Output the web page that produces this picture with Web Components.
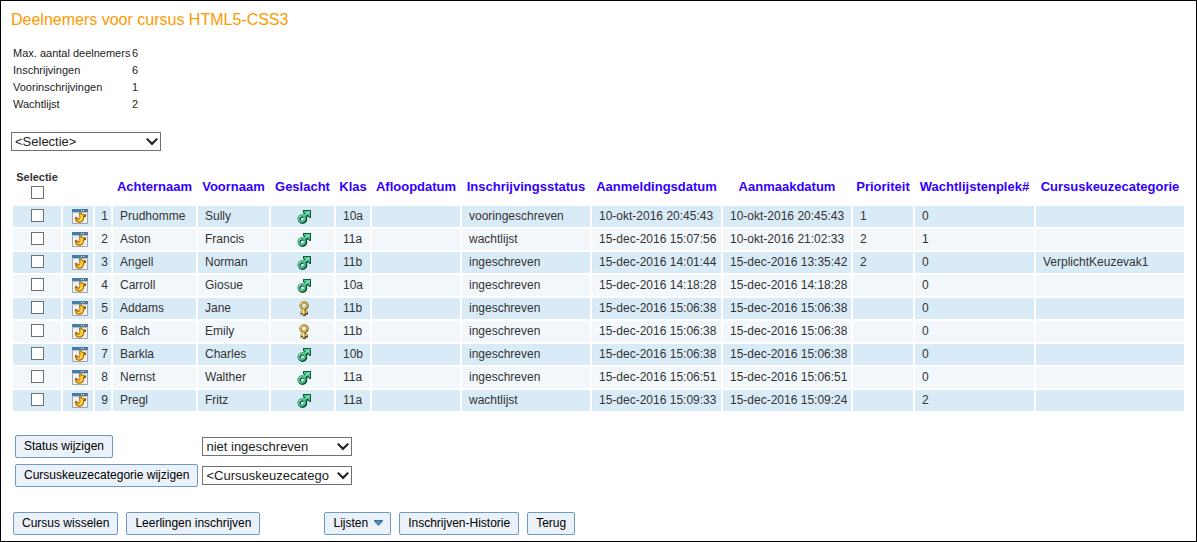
<!DOCTYPE html>
<html lang="nl">
<head>
<meta charset="utf-8">
<title>Deelnemers</title>
<style>
  body { margin: 0; font-family: "Liberation Sans", Arial, sans-serif; color: #333; background: #fff; }
</style>
</head>
<body>
<course-page></course-page>

<template id="t-page">
  <style>
    :host { display: flex; flex-direction: column; align-items: flex-start; box-sizing: border-box; min-height: 100vh; border: 1px solid #000; padding: 10px 10px 6px; }
    h1 { margin: 0 0 16px; font-size: 16px; line-height: 18px; font-weight: 400; color: #ff9900; }
    participants-table { align-self: stretch; margin-top: 17px; }
    .actions { display: grid; grid-template-columns: max-content 150px; column-gap: 4px; row-gap: 6px; align-items: center; justify-items: start; margin: 22px 0 25px 4px; }
    nav { display: flex; gap: 8px; margin-left: 2px; }
    .group { display: flex; gap: 8px; margin-left: 56px; }
  </style>
  <h1>Deelnemers voor cursus HTML5-CSS3</h1>
  <course-totals></course-totals>
  <pick-list label="Selectie" value="&lt;Selectie&gt;"></pick-list>
  <participants-table></participants-table>
  <div class="actions">
    <tool-button>Status wijzigen</tool-button>
    <pick-list label="Status" value="niet ingeschreven"></pick-list>
    <tool-button>Cursuskeuzecategorie wijzigen</tool-button>
    <pick-list label="Cursuskeuzecategorie" value="&lt;Cursuskeuzecatego"></pick-list>
  </div>
  <nav>
    <tool-button>Cursus wisselen</tool-button>
    <tool-button>Leerlingen inschrijven</tool-button>
    <div class="group">
      <tool-button menu>Lijsten</tool-button>
      <tool-button>Inschrijven-Historie</tool-button>
      <tool-button>Terug</tool-button>
    </div>
  </nav>
</template>

<template id="t-totals">
  <style>
    :host { display: block; margin-bottom: 19px; }
    table { border-collapse: collapse; margin-left: 2px; font-size: 11px; line-height: 17px; }
    th, td { padding: 0; text-align: left; font-weight: 400; color: #222; white-space: nowrap; }
    th { padding-right: 1px; min-width: 118px; }
  </style>
  <table>
    <tr><th scope="row">Max. aantal deelnemers</th><td>6</td></tr>
    <tr><th scope="row">Inschrijvingen</th><td>6</td></tr>
    <tr><th scope="row">Voorinschrijvingen</th><td>1</td></tr>
    <tr><th scope="row">Wachtlijst</th><td>2</td></tr>
  </table>
</template>

<template id="t-pick">
  <style>
    :host { display: inline-grid; width: 150px; align-items: center; }
    select, svg { grid-area: 1 / 1; }
    select { appearance: none; box-sizing: border-box; width: 100%; height: 19px; margin: 0; padding: 0 20px 0 3px; border: 1px solid #707070; border-radius: 0; background: #fff; color: #222; font: 13px/17px "Liberation Sans", Arial, sans-serif; }
    svg { justify-self: end; margin-right: 3px; pointer-events: none; }
  </style>
  <select><option></option></select>
  <svg width="12" height="8" viewBox="0 0 12 8"><path d="M0 1.2 1.5 0 6 4.2 10.5 0 12 1.2 6 7.4Z" fill="#222"/></svg>
</template>

<template id="t-button">
  <style>
    :host { display: inline-block; }
    button { display: flex; align-items: center; gap: 6px; box-sizing: border-box; height: 23px; margin: 0; padding: 0 8px 1px; border: 1px solid #6d9bc3; border-radius: 2px; background: #eaf1f8; color: #000; font: 12px/20px "Liberation Sans", Arial, sans-serif; white-space: nowrap; }
    :host([menu]) button { padding-right: 7px; }
    svg { display: none; }
    :host([menu]) svg { display: block; }
  </style>
  <button type="button"><slot></slot><svg width="9" height="6" viewBox="0 0 9 6"><path d="M0 0H9V1L5 5.5H4L0 1Z" fill="#3f719f"/><path d="M2 1.5H7L4.5 4Z" fill="#6b9cc8"/></svg></button>
</template>

<template id="t-icon">
  <style>:host { display: block; } svg { display: block; margin: auto; }</style>
</template>

<template id="t-table">
  <style>
    :host { display: block; }
    table { width: 100%; table-layout: fixed; border-collapse: separate; border-spacing: 2px; font-size: 12px; }
    th { height: 34px; padding: 0; white-space: nowrap; font-size: 13px; line-height: 16px; text-align: center; vertical-align: middle; }
    th:first-child { vertical-align: top; }
    th a { color: #3300ff; text-decoration: none; }
    th label { display: block; font-size: 11px; line-height: 14px; padding-bottom: 2px; }
    td { box-sizing: border-box; height: 21px; padding: 0 0 0 7px; line-height: 19px; white-space: nowrap; background: #f2f7fb; }
    tr:nth-child(odd) td { background: #d9ebf7; }
    td.c { text-align: center; padding: 0 0 2px; }
    td.g { padding: 0 0 0 3px; }
    td.n { text-align: right; padding: 0 3px 0 0; }
    td.e { padding: 0 0 0 9px; }
    .e row-icon { width: 16px; }
    input { appearance: none; display: block; box-sizing: border-box; width: 13px; height: 13px; margin: 0 auto; border: 1px solid #707070; background: #fff; }
  </style>
  <table>
    <colgroup></colgroup>
    <thead><tr></tr></thead>
    <tbody></tbody>
  </table>
</template>

<script>
const stamp = (el, id) => {
  const root = el.attachShadow({ mode: 'open' });
  root.append(document.getElementById(id).content.cloneNode(true));
  return root;
};

const ICONS = {
  edit: `<svg width="16" height="15" viewBox="0 0 16 15"><path d="M0.5 0.5H15.5V14.5H0.5Z" fill="#f1f0ec" stroke="#a3a5a8"/><path d="M0 0H16V3H0Z" fill="#477da3"/><path d="M0 3H16V4H0Z" fill="#a9c3d2"/><path d="M9 1H10V2H9ZM11 1H12V2H11Z" fill="#d7ecf5"/><path d="M13 1H15V2H13Z" fill="#d84c32"/><path d="M7 3.5H9.5L10.5 5H13.5V8H12C12.4 11.4 10.4 13.8 7.4 13.8 4.8 13.8 3 12.2 3 9.8V8H5L6 9.5 7.5 9.2Z" fill="#a5690f"/><path d="M8 4 9.6 5.8H12.3L11 7.4C11.4 10.6 9.8 12.6 7.4 12.6 5.3 12.6 4 11.4 3.8 9.4 5 10.8 6.2 10.9 7.4 10.4 8.6 9.6 8.6 7.5 8 4Z" fill="#ffc71c"/><path d="M9.2 6.4C10 9 9.2 11.2 7.2 11.5" fill="none" stroke="#ffe680"/><path d="M12 6H14V7.5L12.5 8.5Z" fill="#6f5516"/></svg>`,
  m: `<svg width="14" height="14" viewBox="0 0 14 14"><circle cx="5.5" cy="9.2" r="3.3" fill="none" stroke="#123f2b" stroke-width="3"/><path d="M7.6 6.8 11.5 2.9" stroke="#174b35" stroke-width="4"/><path d="M6 0H14V8H12.5L10 5.5 6 3Z" fill="#14573a"/><circle cx="4.7" cy="8.5" r="3.2" fill="none" stroke="#43bd85" stroke-width="2.2"/><path d="M7 6.2 11 2.2" stroke="#54cf99" stroke-width="2.2"/><path d="M7 1H13V7L10.5 4.5 9.5 3.2 7 2.5Z" fill="#4cc792"/><path d="M2 7.6 4.2 5.8M8.8 4.5 12.4 1.5" stroke="#c1f7df"/></svg>`,
  f: `<svg width="10" height="15" viewBox="0 0 10 15"><circle cx="5.1" cy="4.8" r="3.4" fill="none" stroke="#665925" stroke-width="2.4"/><path d="M5.3 8V15M1.5 12H9" stroke="#40381a" stroke-width="3"/><circle cx="4.7" cy="4.4" r="3.2" fill="none" stroke="#cfae43" stroke-width="2"/><path d="M4.7 7.8V14M1.2 11.3H8.4" stroke="#d7b64a" stroke-width="2"/><path d="M2.2 3 3.6 1.5M4.5 9V12" stroke="#fff2a8"/></svg>`
};

customElements.define('row-icon', class extends HTMLElement {
  constructor() { super(); this.root = stamp(this, 't-icon'); }
  connectedCallback() {
    const box = document.createElement('div');
    box.innerHTML = ICONS[this.getAttribute('name')];
    this.root.append(box);
  }
});

customElements.define('tool-button', class extends HTMLElement {
  constructor() { super(); stamp(this, 't-button'); }
});

customElements.define('pick-list', class extends HTMLElement {
  constructor() { super(); this.root = stamp(this, 't-pick'); }
  connectedCallback() {
    this.root.querySelector('select').setAttribute('aria-label', this.getAttribute('label'));
    this.root.querySelector('option').textContent = this.getAttribute('value');
  }
});

customElements.define('course-totals', class extends HTMLElement {
  constructor() { super(); stamp(this, 't-totals'); }
});

const COLUMNS = [
  ['sel', 48], ['', 30], ['', 16], ['Achternaam', 83], ['Voornaam', 71], ['Geslacht', 63], ['Klas', 34],
  ['Afloopdatum', 88], ['Inschrijvingsstatus', 128], ['Aanmeldingsdatum', 129], ['Aanmaakdatum', 128],
  ['Prioriteit', 60], ['Wachtlijstenplek#', 119], ['Cursuskeuzecategorie', 148]
];
const ROWS = [
  ['Prudhomme', 'Sully', 'm', '10a', '', 'vooringeschreven', '10-okt-2016 20:45:43', '10-okt-2016 20:45:43', '1', '0', ''],
  ['Aston', 'Francis', 'm', '11a', '', 'wachtlijst', '15-dec-2016 15:07:56', '10-okt-2016 21:02:33', '2', '1', ''],
  ['Angell', 'Norman', 'm', '11b', '', 'ingeschreven', '15-dec-2016 14:01:44', '15-dec-2016 13:35:42', '2', '0', 'VerplichtKeuzevak1'],
  ['Carroll', 'Giosue', 'm', '10a', '', 'ingeschreven', '15-dec-2016 14:18:28', '15-dec-2016 14:18:28', '', '0', ''],
  ['Addams', 'Jane', 'f', '11b', '', 'ingeschreven', '15-dec-2016 15:06:38', '15-dec-2016 15:06:38', '', '0', ''],
  ['Balch', 'Emily', 'f', '11b', '', 'ingeschreven', '15-dec-2016 15:06:38', '15-dec-2016 15:06:38', '', '0', ''],
  ['Barkla', 'Charles', 'm', '10b', '', 'ingeschreven', '15-dec-2016 15:06:38', '15-dec-2016 15:06:38', '', '0', ''],
  ['Nernst', 'Walther', 'm', '11a', '', 'ingeschreven', '15-dec-2016 15:06:51', '15-dec-2016 15:06:51', '', '0', ''],
  ['Pregl', 'Fritz', 'm', '11a', '', 'wachtlijst', '15-dec-2016 15:09:33', '15-dec-2016 15:09:24', '', '2', '']
];

customElements.define('participants-table', class extends HTMLElement {
  constructor() {
    super();
    const root = stamp(this, 't-table');
    root.querySelector('colgroup').innerHTML = COLUMNS.map(c => `<col style="width:${c[1]}px">`).join('');
    root.querySelector('thead tr').innerHTML = COLUMNS.map(([name]) =>
      name === 'sel' ? '<th><label for="all">Selectie</label><input type="checkbox" id="all"></th>'
        : name ? `<th scope="col"><a href="#">${name}</a></th>` : '<th></th>').join('');
    root.querySelector('tbody').innerHTML = ROWS.map((r, i) => `<tr>
      <td class="c"><input type="checkbox" aria-label="${r[0]}"></td>
      <td class="e"><row-icon name="edit"></row-icon></td>
      <td class="n">${i + 1}</td>` + r.map((v, k) =>
        k === 2 ? `<td class="g"><row-icon name="${v}"></row-icon></td>` : `<td>${v}</td>`).join('') + '</tr>').join('');
  }
});

customElements.define('course-page', class extends HTMLElement {
  constructor() { super(); stamp(this, 't-page'); }
});
</script>
</body>
</html>
